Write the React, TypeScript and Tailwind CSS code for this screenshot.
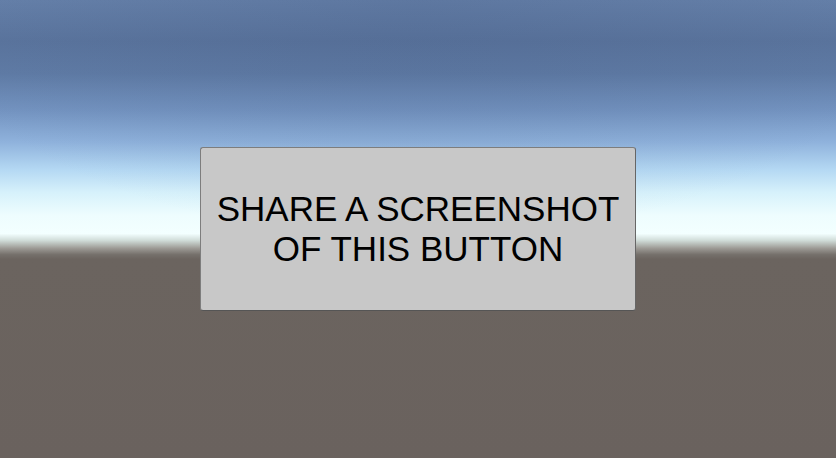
import React from 'react';

export default function App() {
  return (
    <div className="relative w-[836px] h-[458px] overflow-hidden flex items-center justify-center bg-[linear-gradient(to_bottom,#6580a9_0%,#5a749d_9%,#5f7ba5_16%,#7393c0_24%,#8fb2dc_31%,#b4d8f3_37%,#d6f1fb_42%,#eefdfe_47%,#f3ffff_51%,#d0dcd8_52.5%,#9a9792_54.3%,#75706b_55.6%,#6b645f_56.6%,#6a625e_100%)]">
      <div className="absolute inset-x-0 top-0 h-[240px] bg-[radial-gradient(ellipse_60%_100%_at_50%_0%,rgba(60,80,120,0.18),rgba(60,80,120,0)_100%)]" />
      <button className="relative w-[436px] h-[164px] flex items-center justify-center rounded-[3px] border border-[#7d7d7d] border-b-[#555] border-r-[#666] bg-[#c8c8c8] text-black text-[35px] leading-[40px] font-['Liberation_Sans',Arial,sans-serif] text-center">
        SHARE A SCREENSHOT
        <br />
        OF THIS BUTTON
      </button>
    </div>
  );
}
